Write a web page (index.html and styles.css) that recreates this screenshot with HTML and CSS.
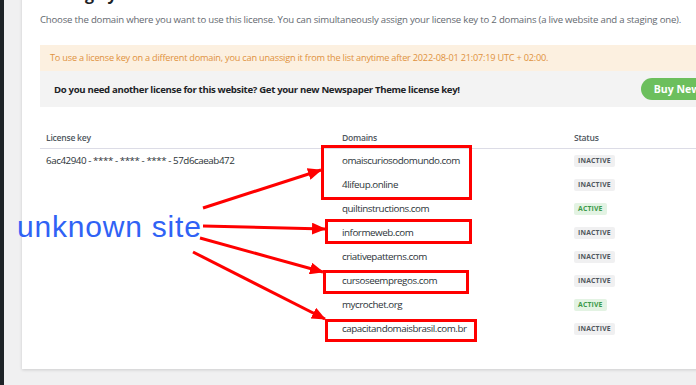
FILE: index.html
```html
<!DOCTYPE html>
<html lang="en">
<head>
    <meta charset="UTF-8">
    <meta name="viewport" content="width=device-width, initial-scale=1.0">
    <title>Manage your domains</title>
    <link rel="stylesheet" href="styles.css">
</head>
<body>
    <div class="sidebar"></div>

    <div class="main">
        <div class="card">
            <h2>Manage your domains</h2>
            <p class="intro">Choose the domain where you want to use this license. You can simultaneously assign your license key to 2 domains (a live website and a staging one).</p>

            <div class="notice">
                To use a license key on a different domain, you can unassign it from the list anytime after 2022-08-01 21:07:19 UTC + 02:00.
            </div>

            <div class="promo">
                <span>Do you need another license for this website? Get your new Newspaper Theme license key!</span>
                <a href="#" class="buy">Buy New License</a>
            </div>

            <div class="licenses">
                <div class="head">License key</div>
                <div class="head">Domains</div>
                <div class="head">Status</div>

                <div class="key">6ac42940 - **** - **** - **** - 57d6caeab472</div>
                <div class="domains">
                    <div>omaiscuriosodomundo.com</div>
                    <div>4lifeup.online</div>
                    <div>quiltinstructions.com</div>
                    <div>informeweb.com</div>
                    <div>criativepatterns.com</div>
                    <div>cursoseempregos.com</div>
                    <div>mycrochet.org</div>
                    <div>capacitandomaisbrasil.com.br</div>
                </div>
                <div class="statuses">
                    <div><span class="badge">Inactive</span></div>
                    <div><span class="badge">Inactive</span></div>
                    <div><span class="badge active">Active</span></div>
                    <div><span class="badge">Inactive</span></div>
                    <div><span class="badge">Inactive</span></div>
                    <div><span class="badge">Inactive</span></div>
                    <div><span class="badge active">Active</span></div>
                    <div><span class="badge">Inactive</span></div>
                </div>
            </div>
        </div>
    </div>

    <!-- annotation drawn over the screenshot -->
    <svg class="marks" width="696" height="385" viewBox="0 0 696 385">
        <defs>
            <marker id="head" markerUnits="userSpaceOnUse" markerWidth="14" markerHeight="12" refX="13" refY="6" orient="auto">
                <path d="M0,0 L14,6 L0,12 z" fill="#ff0000"/>
            </marker>
        </defs>
        <g fill="none" stroke="#ff0000" stroke-width="3">
            <rect x="322.5" y="146.5" width="148" height="52"/>
            <rect x="326.5" y="220.5" width="144" height="22"/>
            <rect x="324.5" y="271.5" width="143" height="21"/>
            <rect x="326.5" y="320.5" width="149" height="20"/>
            <line x1="203" y1="208" x2="321" y2="170" marker-end="url(#head)"/>
            <line x1="203" y1="226" x2="325" y2="229" marker-end="url(#head)"/>
            <line x1="200" y1="238" x2="323" y2="272" marker-end="url(#head)"/>
            <line x1="193" y1="252" x2="325" y2="319" marker-end="url(#head)"/>
        </g>
        <text x="17" y="237" class="label">unknown site</text>
    </svg>
</body>
</html>
```

FILE: styles.css
```css
body {
    margin: 0;
    padding: 0;
    display: flex;
    height: 385px;
    overflow: hidden;
    font-family: 'Open Sans', sans-serif;
    background-color: #f0f0f1;
    position: relative;
}
.sidebar {
    width: 4px;
    flex: none;
    background-color: #1d2327;
}
.main {
    flex: none;
    padding-left: 18px;
}
.card {
    width: 729px;
    padding: 0 18px 28px;
    background: white;
    box-shadow: 0 1px 3px rgba(0, 0, 0, 0.15);
}
h2 {
    margin: -16px 0 0;
    height: 20px;
    font-size: 16px;
    line-height: 20px;
    color: #1d2327;
}
.intro {
    margin: 8px 0 17px;
    font-size: 9.6px;
    line-height: 16px;
    letter-spacing: -0.2px;
    color: #646970;
    white-space: nowrap;
}
.notice {
    height: 26px;
    padding: 0 10px;
    font-size: 9.2px;
    line-height: 26px;
    letter-spacing: -0.22px;
    color: #e0923e;
    background-color: #fcf0e0;
    white-space: nowrap;
}
.promo {
    height: 36px;
    padding: 0 14px;
    display: flex;
    align-items: center;
    justify-content: space-between;
    background-color: #f3f3f3;
    font-size: 9.6px;
    font-weight: bold;
    letter-spacing: -0.33px;
    color: #1d2327;
}
.buy {
    height: 22px;
    padding: 0 13px;
    border-radius: 11px;
    background-color: #6cbf5d;
    color: white;
    font-size: 10.5px;
    line-height: 22px;
    letter-spacing: 0;
    text-decoration: none;
}
.licenses {
    margin-top: 20px;
    display: grid;
    grid-template-columns: 296px 232px 1fr;
    font-size: 9.8px;
    letter-spacing: -0.45px;
    color: #2c3338;
}
.head {
    height: 21px;
    line-height: 22px;
    padding-left: 6px;
    font-size: 8.6px;
    font-weight: 600;
    letter-spacing: -0.25px;
    color: #50575e;
    border-bottom: 1px solid #dcdce6;
}
.key {
    padding-left: 6px;
    line-height: 24px;
}
.domains, .statuses {
    padding-left: 6px;
}
.domains div, .statuses div {
    height: 24px;
    line-height: 24px;
}
.statuses div {
    display: flex;
    align-items: center;
}
.badge {
    display: inline-block;
    height: 12px;
    padding: 0 4px;
    border-radius: 2px;
    line-height: 12px;
    font-size: 6.8px;
    font-weight: bold;
    text-transform: uppercase;
    letter-spacing: 0.2px;
    color: #50575e;
    background-color: #f0f0f1;
}
.badge.active {
    color: #3c9a4a;
    background-color: #e3f3e3;
}
.marks {
    position: absolute;
    top: 0;
    left: 0;
    pointer-events: none;
}
.label {
    font-family: 'Liberation Sans', Arial, sans-serif;
    font-size: 30px;
    letter-spacing: 0.8px;
    fill: #3062f5;
}
```
